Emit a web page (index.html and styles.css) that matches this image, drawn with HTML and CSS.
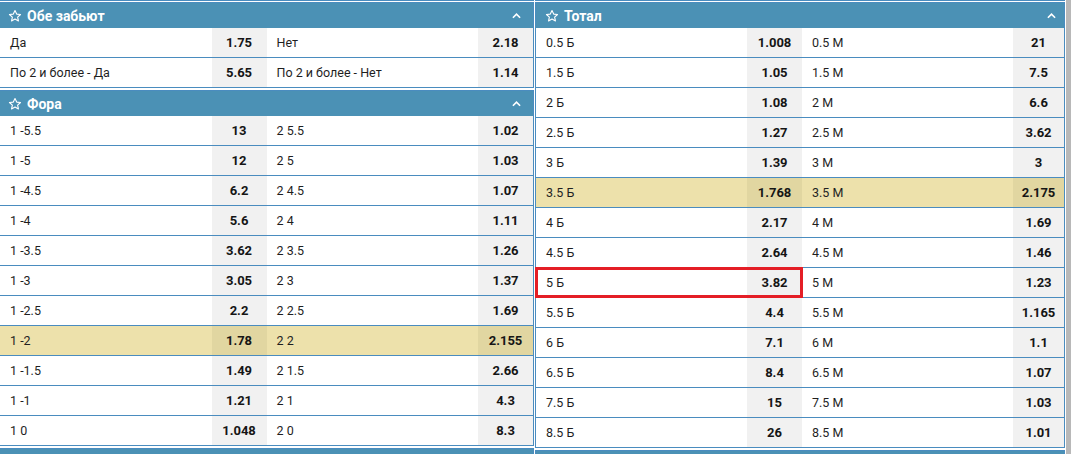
FILE: index.html
```html
<!DOCTYPE html>
<html lang="ru">
<head>
    <meta charset="UTF-8">
    <meta name="viewport" content="width=device-width, initial-scale=1.0">
    <title>Ставки</title>
    <link rel="stylesheet" href="styles.css">
</head>
<body>
    <div class="board">
        <!-- Левая колонка -->
        <div class="col">
            <section class="market">
                <div class="market-head">
                    <svg class="star" viewBox="0 0 24 24"><path d="M12 2.5l2.9 6.2 6.6.7-5 4.5 1.4 6.6L12 17.1l-5.9 3.4 1.4-6.6-5-4.5 6.6-.7z"/></svg>
                    <span class="title">Обе забьют</span>
                    <svg class="chevron" viewBox="0 0 10 6"><path d="M1 5l4-4 4 4"/></svg>
                </div>
                <div class="row">
                    <div class="half"><span class="label">Да</span><span class="odd">1.75</span></div>
                    <div class="half"><span class="label">Нет</span><span class="odd">2.18</span></div>
                </div>
                <div class="row">
                    <div class="half"><span class="label">По 2 и более - Да</span><span class="odd">5.65</span></div>
                    <div class="half"><span class="label">По 2 и более - Нет</span><span class="odd">1.14</span></div>
                </div>
            </section>

            <section class="market">
                <div class="market-head">
                    <svg class="star" viewBox="0 0 24 24"><path d="M12 2.5l2.9 6.2 6.6.7-5 4.5 1.4 6.6L12 17.1l-5.9 3.4 1.4-6.6-5-4.5 6.6-.7z"/></svg>
                    <span class="title">Фора</span>
                    <svg class="chevron" viewBox="0 0 10 6"><path d="M1 5l4-4 4 4"/></svg>
                </div>
                <div class="row">
                    <div class="half"><span class="label">1 -5.5</span><span class="odd">13</span></div>
                    <div class="half"><span class="label">2 5.5</span><span class="odd">1.02</span></div>
                </div>
                <div class="row">
                    <div class="half"><span class="label">1 -5</span><span class="odd">12</span></div>
                    <div class="half"><span class="label">2 5</span><span class="odd">1.03</span></div>
                </div>
                <div class="row">
                    <div class="half"><span class="label">1 -4.5</span><span class="odd">6.2</span></div>
                    <div class="half"><span class="label">2 4.5</span><span class="odd">1.07</span></div>
                </div>
                <div class="row">
                    <div class="half"><span class="label">1 -4</span><span class="odd">5.6</span></div>
                    <div class="half"><span class="label">2 4</span><span class="odd">1.11</span></div>
                </div>
                <div class="row">
                    <div class="half"><span class="label">1 -3.5</span><span class="odd">3.62</span></div>
                    <div class="half"><span class="label">2 3.5</span><span class="odd">1.26</span></div>
                </div>
                <div class="row">
                    <div class="half"><span class="label">1 -3</span><span class="odd">3.05</span></div>
                    <div class="half"><span class="label">2 3</span><span class="odd">1.37</span></div>
                </div>
                <div class="row">
                    <div class="half"><span class="label">1 -2.5</span><span class="odd">2.2</span></div>
                    <div class="half"><span class="label">2 2.5</span><span class="odd">1.69</span></div>
                </div>
                <div class="row hot">
                    <div class="half"><span class="label">1 -2</span><span class="odd">1.78</span></div>
                    <div class="half"><span class="label">2 2</span><span class="odd">2.155</span></div>
                </div>
                <div class="row">
                    <div class="half"><span class="label">1 -1.5</span><span class="odd">1.49</span></div>
                    <div class="half"><span class="label">2 1.5</span><span class="odd">2.66</span></div>
                </div>
                <div class="row">
                    <div class="half"><span class="label">1 -1</span><span class="odd">1.21</span></div>
                    <div class="half"><span class="label">2 1</span><span class="odd">4.3</span></div>
                </div>
                <div class="row">
                    <div class="half"><span class="label">1 0</span><span class="odd">1.048</span></div>
                    <div class="half"><span class="label">2 0</span><span class="odd">8.3</span></div>
                </div>
            </section>

            <!-- следующий рынок, виден только край заголовка -->
            <section class="market">
                <div class="market-head"></div>
            </section>
        </div>

        <!-- Правая колонка -->
        <div class="col total">
            <section class="market">
                <div class="market-head">
                    <svg class="star" viewBox="0 0 24 24"><path d="M12 2.5l2.9 6.2 6.6.7-5 4.5 1.4 6.6L12 17.1l-5.9 3.4 1.4-6.6-5-4.5 6.6-.7z"/></svg>
                    <span class="title">Тотал</span>
                    <svg class="chevron" viewBox="0 0 10 6"><path d="M1 5l4-4 4 4"/></svg>
                </div>
                <div class="row">
                    <div class="half"><span class="label">0.5 Б</span><span class="odd">1.008</span></div>
                    <div class="half"><span class="label">0.5 М</span><span class="odd">21</span></div>
                </div>
                <div class="row">
                    <div class="half"><span class="label">1.5 Б</span><span class="odd">1.05</span></div>
                    <div class="half"><span class="label">1.5 М</span><span class="odd">7.5</span></div>
                </div>
                <div class="row">
                    <div class="half"><span class="label">2 Б</span><span class="odd">1.08</span></div>
                    <div class="half"><span class="label">2 М</span><span class="odd">6.6</span></div>
                </div>
                <div class="row">
                    <div class="half"><span class="label">2.5 Б</span><span class="odd">1.27</span></div>
                    <div class="half"><span class="label">2.5 М</span><span class="odd">3.62</span></div>
                </div>
                <div class="row">
                    <div class="half"><span class="label">3 Б</span><span class="odd">1.39</span></div>
                    <div class="half"><span class="label">3 М</span><span class="odd">3</span></div>
                </div>
                <div class="row hot">
                    <div class="half"><span class="label">3.5 Б</span><span class="odd">1.768</span></div>
                    <div class="half"><span class="label">3.5 М</span><span class="odd">2.175</span></div>
                </div>
                <div class="row">
                    <div class="half"><span class="label">4 Б</span><span class="odd">2.17</span></div>
                    <div class="half"><span class="label">4 М</span><span class="odd">1.69</span></div>
                </div>
                <div class="row">
                    <div class="half"><span class="label">4.5 Б</span><span class="odd">2.64</span></div>
                    <div class="half"><span class="label">4.5 М</span><span class="odd">1.46</span></div>
                </div>
                <div class="row">
                    <div class="half picked"><span class="label">5 Б</span><span class="odd">3.82</span></div>
                    <div class="half"><span class="label">5 М</span><span class="odd">1.23</span></div>
                </div>
                <div class="row">
                    <div class="half"><span class="label">5.5 Б</span><span class="odd">4.4</span></div>
                    <div class="half"><span class="label">5.5 М</span><span class="odd">1.165</span></div>
                </div>
                <div class="row">
                    <div class="half"><span class="label">6 Б</span><span class="odd">7.1</span></div>
                    <div class="half"><span class="label">6 М</span><span class="odd">1.1</span></div>
                </div>
                <div class="row">
                    <div class="half"><span class="label">6.5 Б</span><span class="odd">8.4</span></div>
                    <div class="half"><span class="label">6.5 М</span><span class="odd">1.07</span></div>
                </div>
                <div class="row">
                    <div class="half"><span class="label">7.5 Б</span><span class="odd">15</span></div>
                    <div class="half"><span class="label">7.5 М</span><span class="odd">1.03</span></div>
                </div>
                <div class="row">
                    <div class="half"><span class="label">8.5 Б</span><span class="odd">26</span></div>
                    <div class="half"><span class="label">8.5 М</span><span class="odd">1.01</span></div>
                </div>
            </section>

            <section class="market">
                <div class="market-head"></div>
            </section>
        </div>
    </div>

    <div class="scrollbar"></div>
</body>
</html>
```

FILE: styles.css
```css
body {
    margin: 0;
    font-family: Roboto, "Liberation Sans", Arial, sans-serif;
    color: #1f1f1f;
    background: #fff;
    overflow: hidden;
}
.board {
    display: grid;
    grid-template-columns: 535px 530px;
    column-gap: 1px;
    margin-left: -1px;
    align-items: start;
}
.col {
    border-top: 1px solid #4a8cbf;
    padding-top: 1px;
}
.market {
    border: 1px solid #4a8cbf;
    margin-bottom: 2px;
}
.market-head {
    height: 25px;
    background: #4b91b5;
    color: #fff;
    display: flex;
    align-items: center;
    padding: 0 12px 0 8px;
    font-size: 14px;
    font-weight: 700;
}
.total .market-head {
    padding: 0 8px 0 9px;
}
.star {
    width: 14px;
    height: 14px;
    margin-right: 5px;
    fill: none;
    stroke: #fff;
    stroke-width: 1.9;
    stroke-linejoin: round;
}
.title {
    flex: 1;
}
.chevron {
    width: 9px;
    height: 6px;
    fill: none;
    stroke: #fff;
    stroke-width: 1.8;
}
.row {
    display: grid;
    grid-template-columns: 1fr 1fr;
    height: 29px;
    border-bottom: 1px solid #4a8cbf;
}
.row:last-child {
    border-bottom: 0;
}
.total .row {
    grid-template-columns: 266px 1fr;
}
.half {
    display: grid;
    grid-template-columns: 1fr 55px;
}
.total .half + .half {
    grid-template-columns: 1fr 51px;
}
.label {
    display: flex;
    align-items: center;
    padding-left: 10px;
    font-size: 12.5px;
}
.odd {
    display: flex;
    align-items: center;
    justify-content: center;
    background: #f1f1f1;
    font-size: 13px;
    font-weight: 700;
    color: #151515;
}
.row.hot {
    background: #ede1ab;
}
.row.hot .odd {
    background: #e1d6a1;
}
.picked {
    outline: 3px solid #e41e26;
    outline-offset: -2px;
}
.scrollbar {
    position: fixed;
    top: 0;
    right: 0;
    width: 5px;
    height: 100%;
    background: rgba(0, 0, 0, 0.28);
}
```
